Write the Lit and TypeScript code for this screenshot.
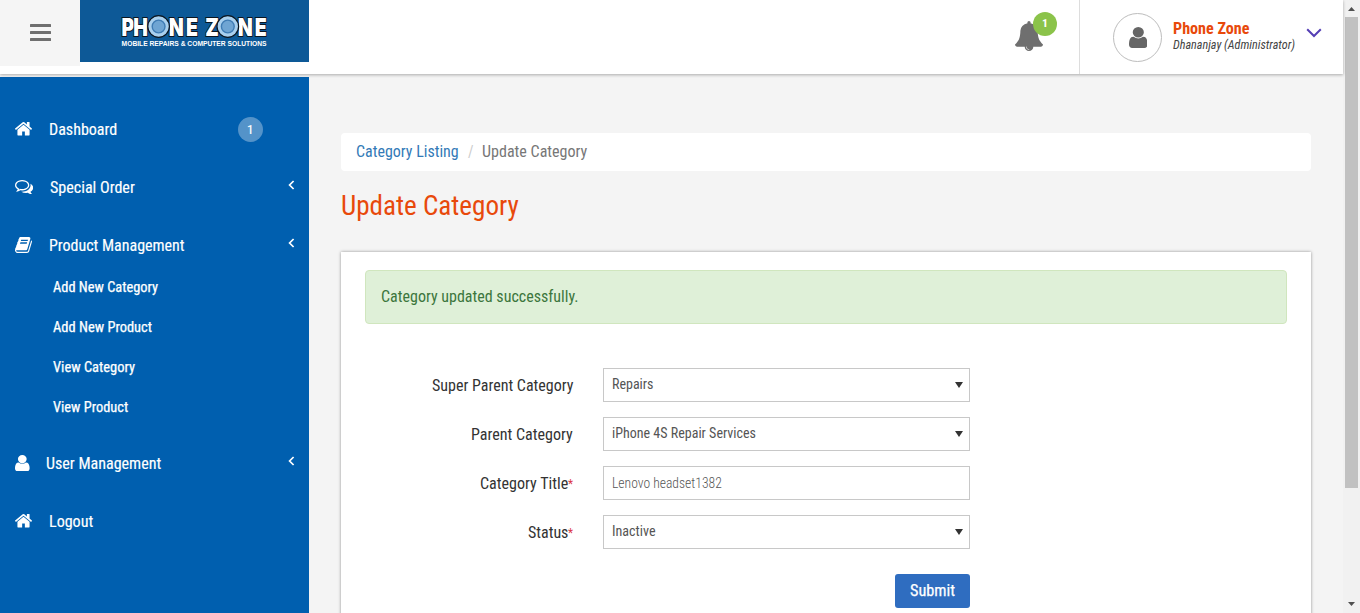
import { LitElement, html, svg, css, nothing } from "lit";
import { customElement, property, state } from "lit/decorators.js";
import { classMap } from "lit/directives/class-map.js";

const ICONS: Record<string, { box: string; w: number; h: number; d: string }> = {
  home: {
    box: "89 253 1614 1283", w: 17, h: 13.4,
    d: "M1472 992v480q0 26-19 45t-45 19h-384v-384h-256v384h-384q-26 0-45-19t-19-45v-480q0-1 .5-3t.5-3l575-474 575 474q1 2 1 6zm223-69l-62 74q-8 9-21 11h-3q-13 0-21-7l-692-577-692 577q-12 8-24 7-13-2-21-11l-62-74q-8-10-7-23.5t11-21.5l719-599q32-26 76-26t76 26l244 204v-195q0-14 9-23t23-9h192q14 0 23 9t9 23v408l219 182q10 8 11 21.5t-7 23.5z",
  },
  comments: {
    box: "0 256 1792 1408", w: 18.2, h: 14.3,
    d: "M704 384q-153 0-286 52t-211.5 141-78.5 191q0 82 53 158t149 132l97 56-35 84q34-20 62-39l44-31 53 10q78 14 153 14 153 0 286-52t211.5-141 78.5-191-78.5-191-211.5-141-286-52zm0-128q191 0 353.5 68.5t256.5 186.5 94 257-94 257-256.5 186.5-353.5 68.5q-86 0-176-16-124 88-278 128-36 9-86 16h-3q-11 0-20.5-8t-11.5-21q-1-3-1-6.5t.5-6.5 2-6l2.5-5 3.5-5.5 4-5 4.5-5 4-4.5q5-6 23-25t26-29.5 22.5-29 25-38.5 20.5-44q-124-72-195-177t-71-224q0-139 94-257t256.5-186.5 353.5-68.5zm822 1169q10 24 20.5 44t25 38.5 22.5 29 26 29.5 23 25q1 1 4 4.5t4.5 5 4 5 3.5 5.5l2.5 5 2 6 .5 6.5-1 6.5q-3 14-13 22t-22 7q-50-7-86-16-154-40-278-128-90 16-176 16-271 0-472-132 58 4 88 4 161 0 309-45t264-129q125-92 192-212t67-254q0-77-23-152 129 71 204 178t75 230q0 120-71 224.5t-195 176.5z",
  },
  book: {
    box: "64 128 1665 1536", w: 17, h: 16,
    d: "M1703 478q40 57 18 129l-275 906q-19 64-76.5 107.5t-122.5 43.5h-923q-77 0-148.5-53.5t-99.5-131.5q-24-67-2-127 0-4 3-27t4-37q1-8-3-21.5t-3-19.5q2-11 8-21t16.5-23.5 16.5-23.5q23-38 45-91.5t30-91.5q3-10 .5-30t-.5-28q3-11 17-28t17-23q21-36 42-92t25-90q1-9-2.5-32t.5-28q4-13 22-30.5t22-22.5q19-26 42.5-84.5t27.5-96.5q1-8-3-25.5t-2-26.5q2-8 9-18t18-23 17-21q8-12 16.5-30.5t15-35 16-36 19.5-32 26.5-23.5 36-11.5 47.5 5.5l-1 3q38-9 51-9h761q74 0 114 56t18 130l-274 906q-36 119-71.5 153.5t-128.5 34.5h-869q-27 0-38 15-11 16-1 43 24 70 144 70h923q29 0 56-15.5t35-41.5l300-987q7-22 5-57 38 15 59 43zm-1064 2q-4 13 2 22.5t20 9.5h608q13 0 25.5-9.5t16.5-22.5l21-64q4-13-2-22.5t-20-9.5h-608q-13 0-25.5 9.5t-16.5 22.5zm-83 256q-4 13 2 22.5t20 9.5h608q13 0 25.5-9.5t16.5-22.5l21-64q4-13-2-22.5t-20-9.5h-608q-13 0-25.5 9.5t-16.5 22.5z",
  },
  user: {
    box: "256 128 1280 1536", w: 14.6, h: 16.3,
    d: "M1536 1399q0 109-62.5 187t-150.5 78h-854q-88 0-150.5-78t-62.5-187q0-85 8.5-160.5t31.5-152 58.5-131 94-89 134.5-34.5q131 128 313 128t313-128q76 0 134.5 34.5t94 89 58.5 131 31.5 152 8.5 160.5zm-256-887q0 159-112.5 271.5t-271.5 112.5-271.5-112.5-112.5-271.5 112.5-271.5 271.5-112.5 271.5 112.5 112.5 271.5z",
  },
  bell: {
    box: "64 0 1664 1792", w: 28, h: 30,
    d: "M912 1696q0-16-16-16-59 0-101.5-42.5t-42.5-101.5q0-16-16-16t-16 16q0 73 51.5 124.5t124.5 51.5q16 0 16-16zm816-288q0 52-38 90t-90 38h-448q0 106-75 181t-181 75-181-75-75-181h-448q-52 0-90-38t-38-90q50-42 91-88t85-119.5 74.5-158.5 50-206 19.5-260q0-152 117-282.5t307-158.5q-8-19-8-39 0-40 28-68t68-28 68 28 28 68q0 20-8 39 190 28 307 158.5t117 282.5q0 139 19.5 260t50 206 74.5 158.5 85 119.5 91 88z",
  },
};

const icon = (name: string, w = ICONS[name].w, h = ICONS[name].h) => html`
  <svg class="icon" width=${w} height=${h} viewBox=${ICONS[name].box} preserveAspectRatio="none">
    <path d=${ICONS[name].d}></path>
  </svg>`;

/* One line of condensed text with a fixed advance width, centred on its capitals. */
@customElement("fit-text")
export class FitText extends LitElement {
  @property() text = "";
  @property({ type: Number }) width = 0;
  @property({ type: Number }) size = 16;

  static styles = css`
    :host { display: block; flex: none; }
    svg { display: block; overflow: visible; }
    text {
      font-family: "Roboto Condensed", Roboto, "Liberation Sans", sans-serif;
      font-stretch: 75%;
      fill: currentColor;
      stroke: currentColor;
      stroke-width: var(--thicken, 0);
      white-space: pre;
    }
  `;

  render() {
    const h = 20;
    return html`<svg width=${this.width} height=${h}>
      <text x="0" y=${Math.round(h / 2 + this.size * 0.3555 - 0.25)} font-size=${this.size}
        textLength=${this.width} lengthAdjust="spacingAndGlyphs">${this.text}</text>
    </svg>`;
  }
}

const line = (text: string, width: number, size = 16, cls = "") =>
  html`<fit-text class=${cls} .text=${text} .width=${width} .size=${size}></fit-text>`;

interface NavItem {
  label: string; icon: string; width: number; badge?: number; arrow?: boolean;
  children?: [string, number][];
}

@customElement("app-root")
export class AppRoot extends LitElement {
  @state() private nav: NavItem[] = [
    { label: "Dashboard", icon: "home", width: 68.2, badge: 1 },
    { label: "Special Order", icon: "comments", width: 84.8, arrow: true },
    {
      label: "Product Management", icon: "book", width: 135.5, arrow: true,
      children: [["Add New Category", 105], ["Add New Product", 99], ["View Category", 82], ["View Product", 75.2]],
    },
    { label: "User Management", icon: "user", width: 115.2, arrow: true },
    { label: "Logout", icon: "home", width: 44.2 },
  ];

  @state() private fields = [
    { label: "Super Parent Category", lw: 141.4, value: "Repairs", vw: 41.5, select: true, req: false },
    { label: "Parent Category", lw: 101.8, value: "iPhone 4S Repair Services", vw: 144, select: true, req: false },
    { label: "Category Title", lw: 88.2, value: "Lenovo headset1382", vw: 109.8, select: false, req: true },
    { label: "Status", lw: 40.4, value: "Inactive", vw: 43.5, select: true, req: true },
  ];

  static styles = css`
    :host {
      display: grid;
      grid-template-columns: 1343px 17px;
      width: 1360px;
      height: 613px;
      overflow: hidden;
      background: #f4f4f4;
      font-family: Roboto, "Liberation Sans", sans-serif;
    }
    * { box-sizing: border-box; }
    svg { display: block; flex: none; }
    .icon { fill: currentColor; }
    .page { display: grid; grid-template-rows: 74px 539px; min-width: 0; }
    .header {
      display: flex; background: #fff; z-index: 1; position: relative;
      box-shadow: 0 1px 3px rgba(0, 0, 0, 0.3);
    }
    .burger {
      width: 80px; height: 66px; background: #f5f5f5;
      display: flex; flex-direction: column; gap: 4px; padding: 24px 0 0 30px;
    }
    .burger i { width: 20.5px; height: 3px; background: #6f6f6f; border-radius: 0.5px; }
    .logo { width: 229px; height: 62px; background: #0d5997; }
    .tools { margin-left: auto; display: flex; }
    .alerts { width: 64px; padding-top: 21px; color: #6f6f6f; position: relative; }
    .count {
      position: absolute; left: 18px; top: 12px; width: 24px; height: 24px; border-radius: 50%;
      background: #8bc34a; color: #fff; font-weight: 700; padding-top: 1px;
      display: flex; justify-content: center; align-items: flex-start;
    }
    .account {
      width: 264px; border-left: 1px solid #ddd; display: flex; padding: 13px 0 0 33px;
    }
    .avatar {
      width: 49px; height: 49px; border: 1px solid #bdbdbd; border-radius: 50%; color: #666;
      display: flex; justify-content: center; align-items: center; padding-left: 1px;
    }
    .who { margin-left: 11px; padding-top: 6px; width: 123px; display: flex; flex-direction: column; }
    .name { color: #e8490b; font-weight: 700; }
    .role { color: #444; font-style: italic; margin-top: -4px; }
    .caret { margin: 15px 0 0 10px; }

    .body { display: flex; min-height: 0; }
    .sidebar {
      width: 309px; margin-top: 3px; padding-top: 23px; background: #005faf; color: #fff;
      --thicken: 0.15px;
    }
    .item { height: 58px; display: flex; align-items: center; padding: 1px 14px 0 15px; }
    .item .icon { margin-right: 16.8px; margin-top: -1px; }
    .item .end { margin-left: auto; }
    .arrow { margin-top: -5px; }
    .badge {
      width: 25px; height: 25px; border-radius: 50%; background: rgba(255, 255, 255, 0.33);
      display: flex; align-items: center; justify-content: center; margin-right: 32px; margin-top: -1px;
    }
    .badge fit-text { margin-top: 1px; }
    .sub { margin: -7px 0 7px; --thicken: 0.25px; }
    .sub div { height: 40px; display: flex; align-items: center; padding-left: 53px; }

    .main { width: 1034px; padding: 59px 32px 0; display: flex; flex-direction: column; }
    .crumbs {
      height: 38px; flex: none; background: #fff; border-radius: 4px; padding: 0 15px;
      display: flex; align-items: center; color: #777;
    }
    .link { color: #337ab7; }
    .slash { color: #ccc; margin: 0 9px; }
    .title { color: #e8490b; margin: 25px 0 0; height: 55px; flex: none; }
    .panel {
      flex: none; height: 400px; background: #fff; box-shadow: 0 0 3px rgba(0, 0, 0, 0.4);
      padding: 18px 24px; margin-top: 1px;
    }
    .notice {
      height: 54px; background: #dff0d8; border: 1px solid #d0e6be; border-radius: 4px; color: #3c763d;
      display: flex; align-items: center; padding: 0 15px;
    }
    .form { display: grid; gap: 15px; width: 605px; margin-top: 44px; }
    .row { display: grid; grid-template-columns: 208px 367px; column-gap: 30px; height: 34px; }
    .label { display: flex; justify-content: flex-end; align-items: center; color: #333; padding-top: 1px; }
    .star { color: #dc3545; }
    .field {
      border: 1px solid #c8c8c8; background: #fff; color: #555; display: flex;
      justify-content: space-between; align-items: flex-start; padding: 5px 6px 0 8px;
    }
    .plain { padding-top: 6px; font-weight: 300; }
    .field .tri { margin-top: 8px; }
    .submit {
      width: 75px; height: 34px; margin: 25px 0 0 530px; border: 0; border-radius: 3px; background: #2f6dc0;
      color: #fff; padding: 0; display: flex; justify-content: center; align-items: center;
      font-weight: 400; --thicken: 0.25px;
    }
    .scroll { background: #f1f1f1; display: flex; flex-direction: column; align-items: center; }
    .thumb { width: 13px; height: 471px; background: #c1c1c1; }
    .up { margin: 7px 0 6px; }
    .down { margin: auto 0 7px; }
  `;

  private logo() {
    const ring = (cx: number) => svg`
      <circle cx=${cx} cy="26.5" r="10.8" fill="#a9d0ee" stroke="#0a1520" stroke-width="1.2"></circle>
      <circle cx=${cx} cy="26.5" r="6.4" fill="#6fa5d3" stroke="#3f7cb4" stroke-width="1.4"></circle>`;
    const squeeze = 0.78;
    const word = (text: string, xs: number[]) => svg`
      <text y="36" x=${xs.map((x) => (x / squeeze).toFixed(1)).join(" ")}>${text}</text>`;
    return html`<svg class="logo" width="229" height="62" viewBox="80 0 229 62">
      <g transform="scale(${squeeze} 1)" font-family="Inter, sans-serif" font-weight="900" font-size="25"
        fill="#fff" stroke="#0a1520" stroke-width="2" paint-order="stroke">
        ${word("PHONE", [121.6, 133.2, 151, 168.6, 186])}
        ${word("ZONE", [205.4, 220, 237.8, 254.8])}
      </g>
      ${ring(158.6)}${ring(227.8)}
      <text x="121.6" y="45.8" font-family="Liberation Sans, sans-serif" font-weight="700" font-size="6.3" fill="#fff"
        textLength="145" lengthAdjust="spacingAndGlyphs">MOBILE REPAIRS &amp; COMPUTER SOLUTIONS</text>
    </svg>`;
  }

  private navItem(n: NavItem) {
    return html`
      <div class="item">
        ${icon(n.icon)}${line(n.label, n.width)}
        ${n.badge ? html`<span class="badge end">${line(String(n.badge), 6.5, 12)}</span>` : nothing}
        ${n.arrow
          ? html`<svg class="arrow end" width="7" height="10" viewBox="0 0 7 10">
              <path d="M5.6 1L1.6 5l4 4" fill="none" stroke="#fff" stroke-width="1.7"></path>
            </svg>`
          : nothing}
      </div>
      ${n.children
        ? html`<div class="sub">${n.children.map(([t, w]) => html`<div>${line(t, w, 14)}</div>`)}</div>`
        : nothing}`;
  }

  render() {
    return html`
      <div class="page">
        <header class="header">
          <div class="burger"><i></i><i></i><i></i></div>
          ${this.logo()}
          <div class="tools">
            <div class="alerts">${icon("bell")}<span class="count">${line("1", 6, 11)}</span></div>
            <div class="account">
              <div class="avatar">${icon("user", 18.6, 21)}</div>
              <div class="who">
                ${line("Phone Zone", 76.5, 16, "name")}
                ${line("Dhananjay (Administrator)", 122, 12, "role")}
              </div>
              <svg class="caret" width="16" height="10" viewBox="0 0 16 10">
                <path d="M1.2 1.2L8 8l6.8-6.8" fill="none" stroke="#553fb5" stroke-width="2"></path>
              </svg>
            </div>
          </div>
        </header>
        <div class="body">
          <nav class="sidebar">${this.nav.map((n) => this.navItem(n))}</nav>
          <main class="main">
            <div class="crumbs">
              ${line("Category Listing", 102.7, 16, "link")}${line("/", 5.5, 16, "slash")}${line("Update Category", 105.3, 16)}
            </div>
            <div class="title">${line("Update Category", 177.8, 27)}</div>
            <section class="panel">
              <div class="notice">${line("Category updated successfully.", 197.5, 16)}</div>
              <div class="form">
                ${this.fields.map((f) => html`
                  <div class="row">
                    <div class="label">${line(f.label, f.lw)}${f.req ? line("*", 5, 12, "star") : nothing}</div>
                    <div class=${classMap({ field: true, plain: !f.select })}>
                      ${line(f.value, f.vw, 14)}
                      ${f.select
                        ? html`<svg class="tri" width="8" height="6" viewBox="0 0 8 6"><path d="M0 0h8L4 6z" fill="#333"></path></svg>`
                        : nothing}
                    </div>
                  </div>`)}
              </div>
              <button class="submit">${line("Submit", 45, 16)}</button>
            </section>
          </main>
        </div>
      </div>
      <div class="scroll">
        <svg class="up" width="7" height="4" viewBox="0 0 7 4"><path d="M0 4h7L3.5 0z" fill="#505050"></path></svg>
        <div class="thumb"></div>
        <svg class="down" width="7" height="4" viewBox="0 0 7 4"><path d="M0 0h7L3.5 4z" fill="#505050"></path></svg>
      </div>`;
  }
}
